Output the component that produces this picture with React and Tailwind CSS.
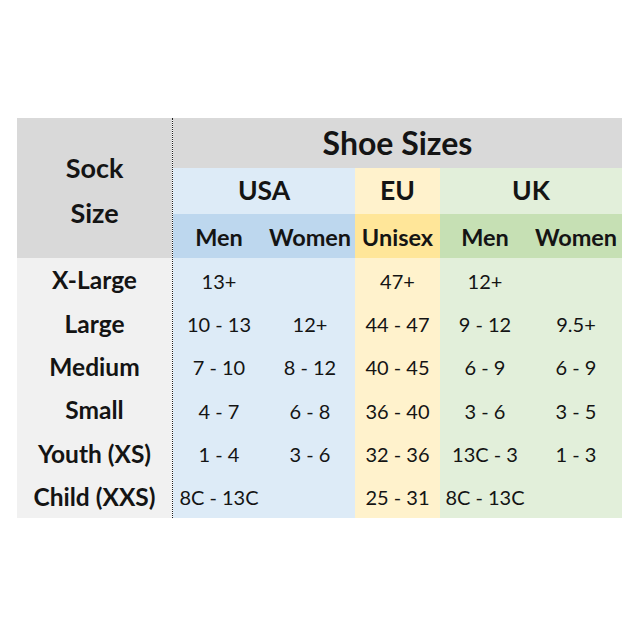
import React from "react";

const rows = [
  ["X-Large", "13+", "", "47+", "12+", ""],
  ["Large", "10 - 13", "12+", "44 - 47", "9 - 12", "9.5+"],
  ["Medium", "7 - 10", "8 - 12", "40 - 45", "6 - 9", "6 - 9"],
  ["Small", "4 - 7", "6 - 8", "36 - 40", "3 - 6", "3 - 5"],
  ["Youth (XS)", "1 - 4", "3 - 6", "32 - 36", "13C - 3", "1 - 3"],
  ["Child (XXS)", "8C - 13C", "", "25 - 31", "8C - 13C", ""],
];

export default function App() {
  return (
    <div
      className="w-[640px] h-[640px] bg-white pt-[118px] pl-[17px] text-[#141414]"
      style={{ fontFamily: "Lato, 'Open Sans', sans-serif" }}
    >
      <div className="flex">
        <div className="w-[156px] border-r border-dotted border-[#222] flex flex-col">
          <div className="h-[140px] bg-[#d9d9d9] flex flex-col items-center justify-center font-bold text-[27px] leading-[45px] pt-[4px]">
            <span>Sock</span>
            <span>Size</span>
          </div>
          {rows.map((r) => (
            <div
              key={r[0]}
              className="h-[43.33px] bg-[#f1f1f1] flex items-center justify-center font-bold text-[24.5px] pt-[2px]"
            >
              {r[0]}
            </div>
          ))}
        </div>
        <div className="grid grid-cols-[92px_90px_85px_90px_92px] grid-rows-[50px_46px_44px_repeat(6,43.33px)] text-[20px]">
          <div className="col-span-5 bg-[#d9d9d9] flex items-center justify-center font-bold text-[32px]">
            Shoe Sizes
          </div>
          <div className="col-span-2 bg-[#ddebf7] flex items-center justify-center font-bold text-[26.5px]">
            USA
          </div>
          <div className="bg-[#fff2cc] flex items-center justify-center font-bold text-[26.5px]">
            EU
          </div>
          <div className="col-span-2 bg-[#e2efda] flex items-center justify-center font-bold text-[26.5px]">
            UK
          </div>
          <div className="bg-[#bdd7ee] flex items-center justify-center font-bold text-[23.5px] pt-[4px]">Men</div>
          <div className="bg-[#bdd7ee] flex items-center justify-center font-bold text-[23.5px] pt-[4px]">Women</div>
          <div className="bg-[#ffe699] flex items-center justify-center font-bold text-[23.5px] pt-[4px]">Unisex</div>
          <div className="bg-[#c6e0b4] flex items-center justify-center font-bold text-[23.5px] pt-[4px]">Men</div>
          <div className="bg-[#c6e0b4] flex items-center justify-center font-bold text-[23.5px] pt-[4px]">Women</div>
          {rows.map((r) => (
            <React.Fragment key={r[0]}>
              <div className="bg-[#ddebf7] flex items-center justify-center whitespace-nowrap pt-[2px]">{r[1]}</div>
              <div className="bg-[#ddebf7] flex items-center justify-center whitespace-nowrap pt-[2px]">{r[2]}</div>
              <div className="bg-[#fff2cc] flex items-center justify-center whitespace-nowrap pt-[2px]">{r[3]}</div>
              <div className="bg-[#e2efda] flex items-center justify-center whitespace-nowrap pt-[2px]">{r[4]}</div>
              <div className="bg-[#e2efda] flex items-center justify-center whitespace-nowrap pt-[2px]">{r[5]}</div>
            </React.Fragment>
          ))}
        </div>
      </div>
    </div>
  );
}
